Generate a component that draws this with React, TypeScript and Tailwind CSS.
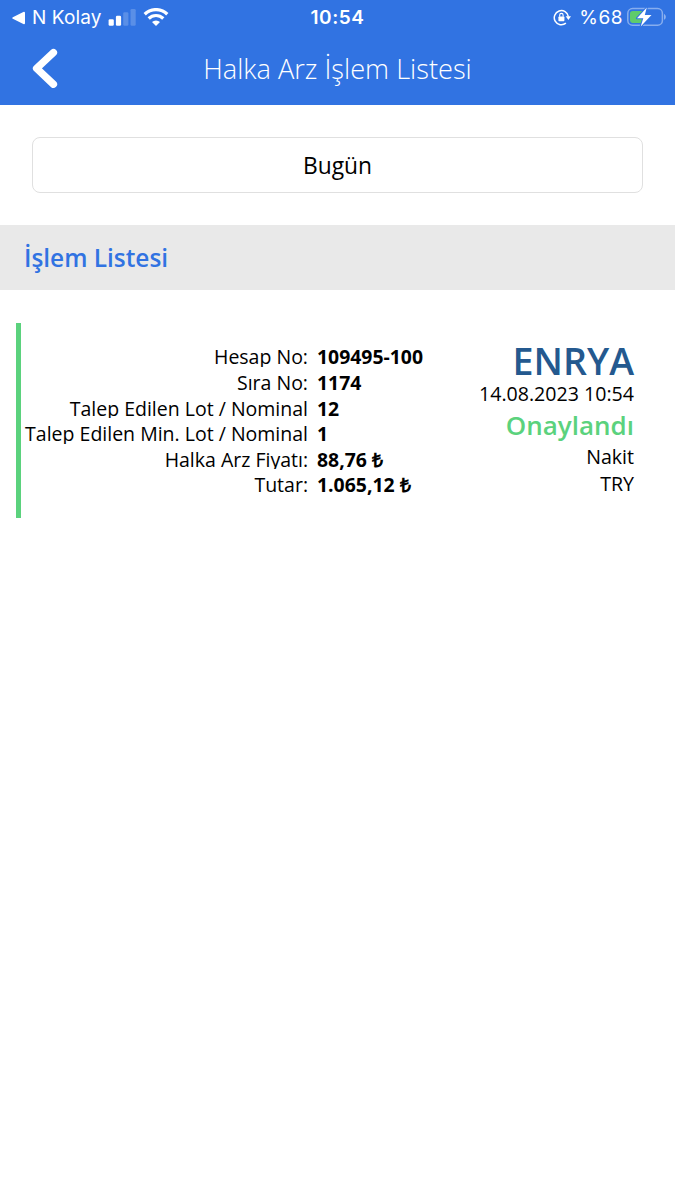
interface DetailRow {
  label: string;
  value: string;
}

const details: DetailRow[] = [
  { label: "Hesap No:", value: "109495-100" },
  { label: "Sıra No:", value: "1174" },
  { label: "Talep Edilen Lot / Nominal", value: "12" },
  { label: "Talep Edilen Min. Lot / Nominal", value: "1" },
  { label: "Halka Arz Fiyatı:", value: "88,76 ₺" },
  { label: "Tutar:", value: "1.065,12 ₺" },
];

const SignalIcon = () => (
  <svg width="28" height="18" viewBox="0 0 28 18" fill="white">
    <rect x="0.6" y="10.3" width="5.2" height="6.4" rx="1.3" />
    <rect x="7.9" y="6.8" width="5.2" height="9.9" rx="1.3" />
    <rect x="15.2" y="3.3" width="5.2" height="13.4" rx="1.3" opacity="0.2" />
    <rect x="22.5" y="0" width="5.2" height="16.7" rx="1.3" opacity="0.2" />
  </svg>
);

const WifiIcon = () => (
  <svg width="26" height="20" viewBox="0 0 26 20" fill="none" stroke="white">
    <path d="M1.7 6.2A16.2 16.2 0 0 1 24.3 6.2" strokeWidth="3.3" />
    <path d="M5.7 10.5A10.4 10.4 0 0 1 20.3 10.5" strokeWidth="3.2" />
    <path
      d="M13 18.1L9 14.1A5.6 5.6 0 0 1 17 14.1Z"
      fill="white"
      stroke="none"
    />
  </svg>
);

const RotationLockIcon = () => (
  <svg width="18" height="18" viewBox="0 0 18 18" fill="none" stroke="white">
    <path d="M12.9 14.2A7.1 7.1 0 1 1 15.4 7.7" strokeWidth="1.5" />
    <path d="M12.7 7.3H18L15.4 10.9Z" fill="white" stroke="none" />
    <rect x="5.4" y="7.5" width="6" height="4.8" rx="0.7" fill="white" stroke="none" />
    <path d="M6.7 7.7V6.1a1.7 1.7 0 0 1 3.4 0V7.7" strokeWidth="1.1" />
  </svg>
);

const BatteryIcon = () => (
  <svg width="40" height="22" viewBox="0 0 40 22" fill="none">
    <rect x="0.8" y="1.6" width="34.6" height="16.6" rx="4.8" stroke="white" strokeOpacity="0.42" strokeWidth="1.5" />
    <path d="M37 7C39.4 7.9 39.4 11.9 37 12.8Z" fill="white" fillOpacity="0.45" />
    <path d="M5.8 3.9H17V15.9H5.8Q3 15.9 3 13.1V6.7Q3 3.9 5.8 3.9Z" fill="#5fcb6b" />
    <path
      d="M19.8 0.6L10 11.2H16.3L13.7 19.4L24.5 8H17.8Z"
      fill="white"
      stroke="#3173e2"
      strokeWidth="2"
      paintOrder="stroke"
      strokeLinejoin="round"
    />
  </svg>
);

function StatusBar() {
  return (
    <div className="grid h-[34px] grid-cols-[1fr_auto_1fr] items-center font-['Inter',sans-serif] text-[19px] leading-[34px] text-white">
      <div className="flex items-center pl-3">
        <svg width="14" height="14" viewBox="0 0 14 14" fill="white">
          <path d="M0.8 6.2L11.3 0.9Q13 0.4 13 2V12Q13 13.6 11.3 13.1L0.8 7.8Q-0.3 7 0.8 6.2Z" />
        </svg>
        <span className="ml-1.5 w-[76px] pt-px tracking-[0.1px] whitespace-nowrap">
          N Kolay
        </span>
        <SignalIcon />
        <span className="ml-[7px]">
          <WifiIcon />
        </span>
      </div>
      <span className="text-[19px] font-semibold tracking-[0.6px]">10:54</span>
      <div className="flex items-center justify-end pr-2">
        <RotationLockIcon />
        <span className="mr-1 ml-2 pt-px tracking-[0.5px]">%68</span>
        <BatteryIcon />
      </div>
    </div>
  );
}

function TransactionCard() {
  return (
    <div className="mt-[33px] ml-4 flex h-[195px] border-l-[5px] border-[#5bd27d] pt-[18.4px] pr-[41px]">
      <div className="text-[19.5px] text-black">
        {details.map((row) => (
          <div key={row.label} className="flex h-[25.6px]">
            <span className="w-[287px] overflow-hidden text-right leading-[32px] whitespace-nowrap">
              {row.label}
            </span>
            <span className="ml-[9px] text-[19.4px] leading-[32px] font-bold whitespace-nowrap">
              {row.value}
            </span>
          </div>
        ))}
      </div>

      <div className="ml-auto flex flex-col items-end text-[19.6px] whitespace-nowrap text-black">
        <span className="text-[37.6px] leading-[39px] font-semibold text-[#24598f]">
          ENRYA
        </span>
        <span className="leading-[27px]">14.08.2023 10:54</span>
        <span className="text-[26px] leading-[36px] font-semibold text-[#5bd27d]">
          Onaylandı
        </span>
        <span className="leading-[27px]">Nakit</span>
        <span className="leading-[27px]">TRY</span>
      </div>
    </div>
  );
}

export default function App() {
  return (
    <div className="h-[1200px] w-[675px] overflow-hidden bg-white font-['Open_Sans',sans-serif]">
      <header className="h-[104.5px] bg-[#3173e2]">
        <StatusBar />
        <div className="grid h-[70px] grid-cols-[1fr_auto_1fr] items-center text-white">
          <button className="pl-[31px]" aria-label="Geri">
            <svg width="28" height="42" viewBox="0 0 28 42" fill="none" stroke="white" strokeWidth="7.4" strokeLinecap="round" strokeLinejoin="round">
              <path d="M22.4 4.6L5.6 20.4L22.4 36.2" />
            </svg>
          </button>
          <h1 className="text-[27.2px] font-light">Halka Arz İşlem Listesi</h1>
        </div>
      </header>

      <div className="px-8 pt-[32.5px] pb-8">
        <button className="block h-14 w-full rounded-lg border border-[#e0e0e0] pt-0.5 text-[22.8px] text-black">
          Bugün
        </button>
      </div>

      <h2 className="h-[65px] bg-[#e9e9e9] pl-6 text-[24.4px] leading-[66px] font-semibold text-[#3173e2]">
        İşlem Listesi
      </h2>

      <TransactionCard />
    </div>
  );
}
